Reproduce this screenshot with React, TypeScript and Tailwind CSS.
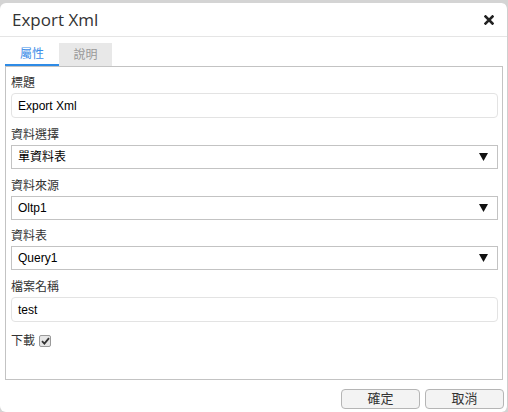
import React from "react";

const cjk = "font-['Liberation_Sans','Noto_Sans_CJK_TC',sans-serif]";

function Caret() {
  return (
    <svg width="9" height="8" viewBox="0 0 9 8" className="shrink-0">
      <polygon points="0,0 9,0 4.5,8" fill="#111" />
    </svg>
  );
}

function Label({ children }: { children: React.ReactNode }) {
  return <div className="h-[20px] leading-[20px] text-[12px] text-[#333]">{children}</div>;
}

function TextInput({ value }: { value: string }) {
  return (
    <div className="h-[25px] border border-[#e3e3e3] rounded-[4px] pl-[6px] flex items-center text-[12px] text-black">
      {value}
    </div>
  );
}

function Select({ value }: { value: string }) {
  return (
    <div className="h-[24px] border border-[#c3c3c3] pl-[6px] pr-[9px] flex items-center justify-between text-[12px] text-black">
      <span>{value}</span>
      <Caret />
    </div>
  );
}

export default function App() {
  return (
    <div className={`w-[508px] h-[412px] bg-[#d4d4d4] pt-[3px] overflow-hidden ${cjk}`}>
      <div className="h-[409px] bg-white rounded-[6px] border-r border-[#cfcfcf] flex flex-col">
        <div className="h-[34px] border-b border-[#e5e5e5] flex items-center justify-between pl-[12px] pr-[13px] shrink-0">
          <span className="text-[17px] text-[#333] font-['Open_Sans',sans-serif] leading-none">Export Xml</span>
          <svg width="10" height="10" viewBox="0 0 10 10">
            <path d="M1.5 1.5 L8.5 8.5 M8.5 1.5 L1.5 8.5" stroke="#222" strokeWidth="2.6" strokeLinecap="square" />
          </svg>
        </div>
        <div className="pl-[5px] pr-[4px] pt-[6px]">
          <div className="flex h-[23px]">
            <div className="w-[54px] bg-white border-b-2 border-[#2e8be6] text-[#3d8ee8] text-[12px] flex items-center justify-center">屬性</div>
            <div className="w-[53px] bg-[#e8e8e8] text-[#999] text-[12px] flex items-center justify-center">說明</div>
          </div>
          <div className="h-[314px] border border-[#c3c3c3] pl-[5px] pr-[4px] pt-[6px]">
            <Label>標題</Label>
            <TextInput value="Export Xml" />
            <div className="h-[7px]" />
            <Label>資料選擇</Label>
            <Select value="單資料表" />
            <div className="h-[7px]" />
            <Label>資料來源</Label>
            <Select value="Oltp1" />
            <div className="h-[6px]" />
            <Label>資料表</Label>
            <Select value="Query1" />
            <div className="h-[7px]" />
            <Label>檔案名稱</Label>
            <TextInput value="test" />
            <div className="h-[7px]" />
            <div className="h-[24px] flex items-center gap-[4px] text-[12px] text-[#333]">
              <span>下載</span>
              <div className="w-[12px] h-[12px] border border-[#9a9a9a] rounded-[2px] bg-[#e6e6e6] flex items-center justify-center">
                <svg width="9" height="8" viewBox="0 0 9 8">
                  <path d="M1 4.2 L3.4 6.6 L8 1.2" stroke="#333" strokeWidth="1.8" fill="none" />
                </svg>
              </div>
            </div>
          </div>
        </div>
        <div className="flex justify-end gap-[5px] pr-[3px] pt-[9px]">
          <div className="w-[79px] h-[20px] border border-[#b5b5b5] rounded-[4px] bg-[#f3f3f3] flex items-center justify-center text-[13px] text-[#333]">確定</div>
          <div className="w-[79px] h-[20px] border border-[#b5b5b5] rounded-[4px] bg-[#f3f3f3] flex items-center justify-center text-[13px] text-[#333]">取消</div>
        </div>
      </div>
    </div>
  );
}
